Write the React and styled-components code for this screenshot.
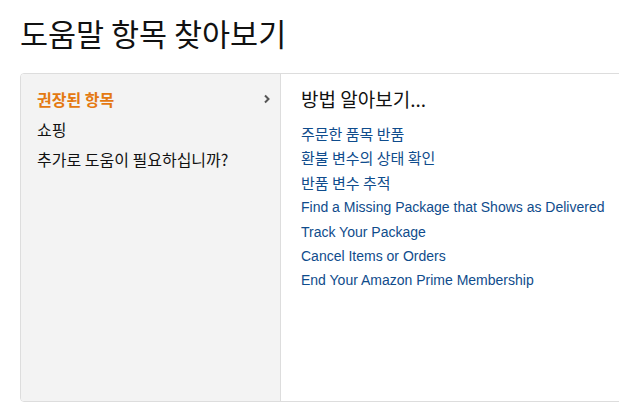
import React from "react";
import styled, { createGlobalStyle } from "styled-components";

const Global = createGlobalStyle`
  html, body { margin: 0; padding: 0; background: #fff; overflow: hidden; }
  body { font-family: "Liberation Sans", "Noto Sans CJK KR", sans-serif; color: #111; }
`;

const Page = styled.div`
  padding: 13px 0 0 20px;
  width: 700px;
`;

const Title = styled.h1`
  margin: 0 0 19px 0;
  font-family: "Noto Sans CJK KR", sans-serif;
  font-weight: 400;
  font-size: 30.5px;
  line-height: 41px;
  color: #111;
`;

const Box = styled.div`
  display: flex;
  height: 327px;
  border: 1px solid #ddd;
  border-radius: 4px;
  overflow: hidden;
`;

const Sidebar = styled.ul`
  list-style: none;
  margin: 0;
  padding: 10px 0 0 16px;
  width: 243px;
  flex: none;
  background: #f3f3f3;
  border-right: 1px solid #ddd;
`;

const NavItem = styled.li`
  display: flex;
  align-items: center;
  justify-content: space-between;
  height: 30px;
  padding-right: 9px;
  font-family: "Noto Sans CJK KR", sans-serif;
  font-size: 16px;
  font-weight: ${(p) => (p.$active ? 700 : 400)};
  color: ${(p) => (p.$active ? "#e47911" : "#111")};
`;

const Chevron = styled.svg`
  width: 8px;
  height: 10px;
`;

const Content = styled.div`
  flex: 1;
  padding: 11px 0 0 20px;
`;

const Heading = styled.h2`
  margin: 0 0 10px 0;
  font-family: "Noto Sans CJK KR", sans-serif;
  font-weight: 400;
  font-size: 19px;
  line-height: 27px;
  color: #111;
`;

const LinkList = styled.ul`
  list-style: none;
  margin: 0;
  padding: 0;
`;

const LinkItem = styled.li`
  height: 24.4px;
  line-height: 24px;
  font-family: ${(p) => (p.$ko ? '"Noto Sans CJK KR", sans-serif' : '"Liberation Sans", sans-serif')};
  font-size: ${(p) => (p.$ko ? "15px" : "14px")};
`;

const Link = styled.a`
  color: #0f4c8c;
  text-decoration: none;
`;

const links = [
  { text: "주문한 품목 반품", ko: true },
  { text: "환불 변수의 상태 확인", ko: true },
  { text: "반품 변수 추적", ko: true },
  { text: "Find a Missing Package that Shows as Delivered" },
  { text: "Track Your Package" },
  { text: "Cancel Items or Orders" },
  { text: "End Your Amazon Prime Membership" },
];

export default function App() {
  return (
    <>
      <Global />
      <Page>
        <Title>도움말 항목 찾아보기</Title>
        <Box>
          <Sidebar>
            <NavItem $active>
              <span>권장된 항목</span>
              <Chevron viewBox="0 0 8 10">
                <path d="M2 1.5 L5.5 5 L2 8.5" fill="none" stroke="#555" strokeWidth="2" />
              </Chevron>
            </NavItem>
            <NavItem>쇼핑</NavItem>
            <NavItem>추가로 도움이 필요하십니까?</NavItem>
          </Sidebar>
          <Content>
            <Heading>방법 알아보기...</Heading>
            <LinkList>
              {links.map((l) => (
                <LinkItem key={l.text} $ko={l.ko}>
                  <Link href="#">{l.text}</Link>
                </LinkItem>
              ))}
            </LinkList>
          </Content>
        </Box>
      </Page>
    </>
  );
}
